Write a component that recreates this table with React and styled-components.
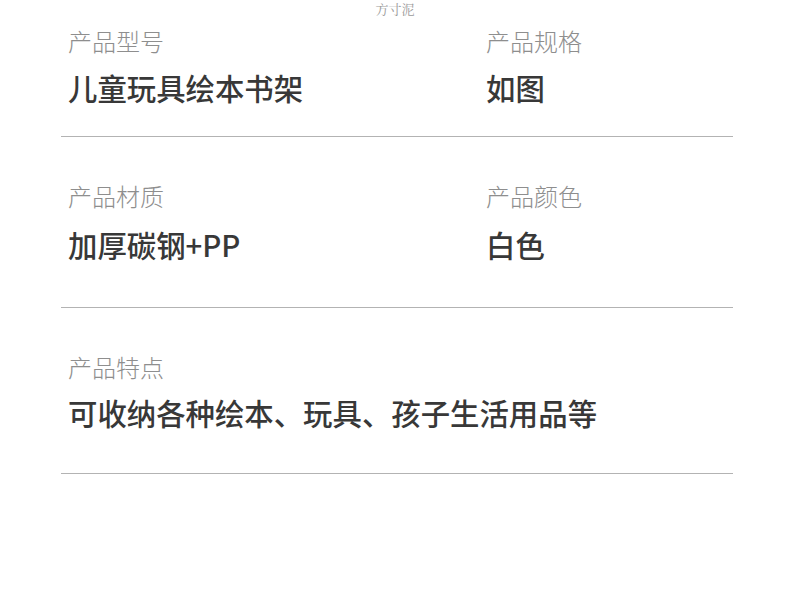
import React from "react";
import styled, { createGlobalStyle } from "styled-components";

const GlobalStyle = createGlobalStyle`
  html, body {
    margin: 0;
    padding: 0;
    background: #ffffff;
  }
  body {
    font-family: "Noto Sans CJK SC", "Noto Sans", sans-serif;
  }
`;

const specs = [
  {
    pad: "25px 0 31px",
    gap: 12,
    cells: [
      { label: "产品型号", value: "儿童玩具绘本书架" },
      { label: "产品规格", value: "如图" },
    ],
  },
  {
    pad: "43px 0 45px",
    gap: 14,
    cells: [
      { label: "产品材质", value: "加厚碳钢+PP" },
      { label: "产品颜色", value: "白色" },
    ],
  },
  {
    pad: "43px 0 43px",
    gap: 11,
    cells: [{ label: "产品特点", value: "可收纳各种绘本、玩具、孩子生活用品等" }],
  },
];

function App() {
  return (
    <Page>
      <GlobalStyle />
      <Watermark>方寸泥</Watermark>
      <Table>
        {specs.map((row, i) => (
          <Row key={i} $pad={row.pad}>
            {row.cells.map((c) => (
              <Cell key={c.label} $gap={row.gap}>
                <Label>{c.label}</Label>
                <Value>{c.value}</Value>
              </Cell>
            ))}
          </Row>
        ))}
      </Table>
    </Page>
  );
}

const Page = styled.div`
  position: relative;
  width: 790px;
  height: 592px;
  overflow: hidden;
  background: #fff;
`;

const Watermark = styled.div`
  position: absolute;
  top: 1px;
  left: 0;
  right: 0;
  text-align: center;
  font-family: "Noto Serif CJK SC", "Liberation Serif", "Noto Sans CJK SC", serif;
  font-size: 13px;
  color: #9a9a9a;
  line-height: 15px;
`;

const Table = styled.div`
  display: flex;
  flex-direction: column;
  width: 672px;
  margin-left: 61px;
`;

const Row = styled.div`
  display: grid;
  grid-template-columns: 418px 1fr;
  padding: ${(p) => p.$pad};
  border-bottom: 1px solid #b3b3b3;
`;

const Cell = styled.div`
  display: flex;
  flex-direction: column;
  gap: ${(p) => p.$gap}px;
  padding-left: 7px;
  white-space: nowrap;
`;

const Label = styled.div`
  font-size: 24px;
  line-height: 32px;
  font-weight: 300;
  color: #8e8e8e;
`;

const Value = styled.div`
  font-size: 29.4px;
  line-height: 36px;
  font-weight: 500;
  color: #383838;
`;

export default App;
